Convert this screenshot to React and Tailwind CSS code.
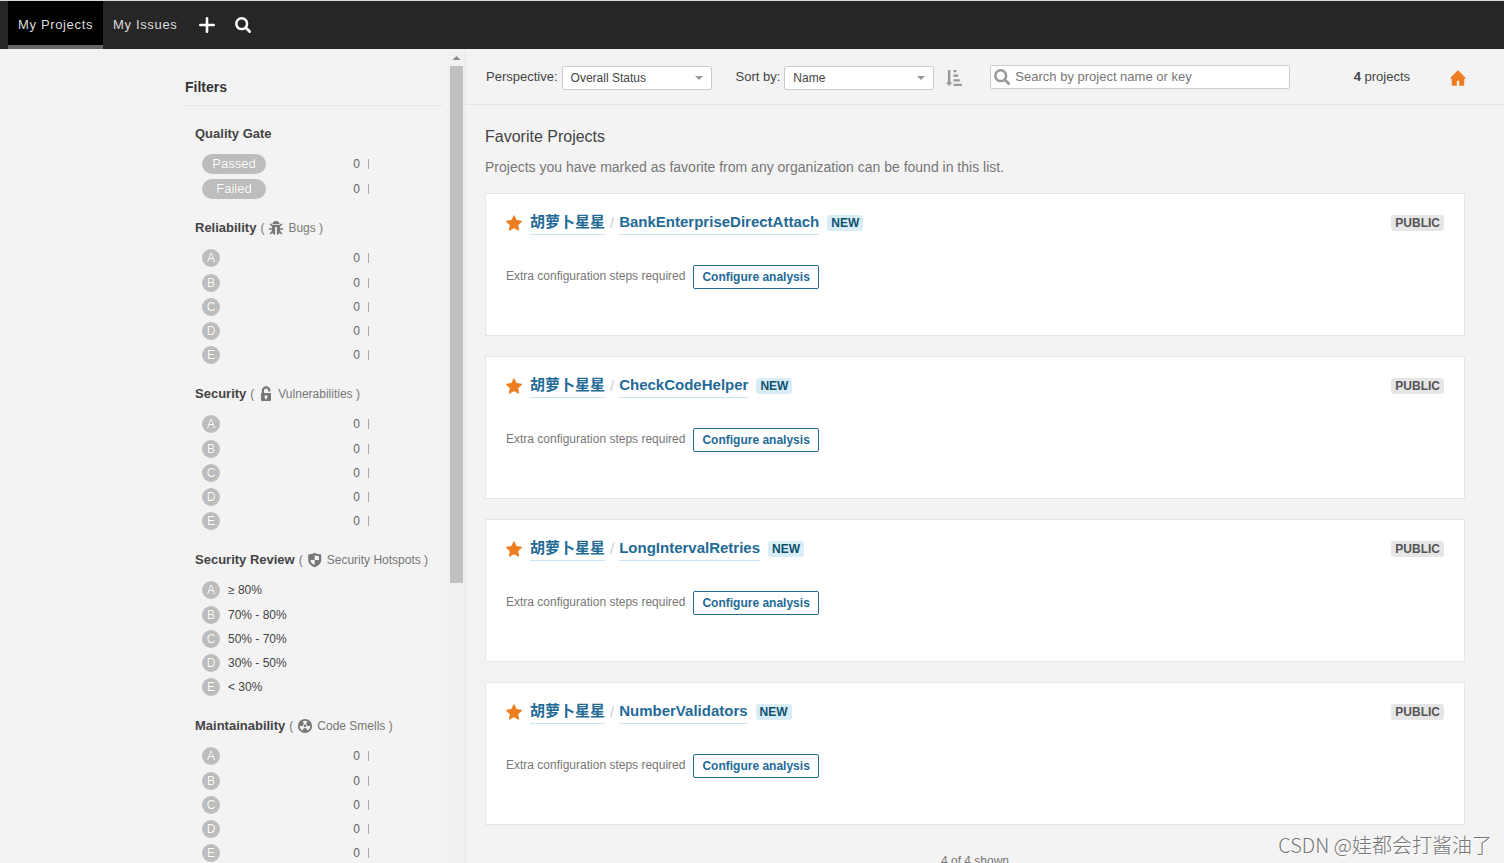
import React from "react";

const ratings = ["A", "B", "C", "D", "E"];

const reviewRanges = {
  A: "≥ 80%",
  B: "70% - 80%",
  C: "50% - 70%",
  D: "30% - 50%",
  E: "< 30%",
};

const projects = [
  "BankEnterpriseDirectAttach",
  "CheckCodeHelper",
  "LongIntervalRetries",
  "NumberValidators",
];

function PlusIcon() {
  return (
    <svg className="size-4" viewBox="0 0 16 16" fill="none" stroke="#fff" strokeWidth="2.6" strokeLinecap="round" aria-hidden="true">
      <path d="M8 1.300v13.400M1.300 8h13.400" />
    </svg>
  );
}

function SearchIcon({ className }) {
  return (
    <svg className={className} viewBox="0 0 16 16" fill="none" stroke="currentColor" aria-hidden="true">
      <circle cx="6.700" cy="6.700" r="5.400" strokeWidth="2.500" />
      <path d="M10.800 10.800l3.800 3.800" strokeWidth="2.800" strokeLinecap="round" />
    </svg>
  );
}

function BugIcon() {
  return (
    <svg className="size-4" viewBox="0 0 16 16" aria-hidden="true">
      <path fill="currentColor" d="M4.400 4.200C4.600 2.200 6 1 8 1s3.400 1.200 3.600 3.200z" />
      <path fill="currentColor" d="M4 5h8v6.200c0 1.900-1.100 3.200-3.100 3.600V7H7.100v7.800C5.100 14.400 4 13.100 4 11.200z" />
      <path
        fill="none"
        stroke="currentColor"
        strokeWidth="1.500"
        d="M4.600 6.200L2 3.800M11.400 6.200L14 3.800M4.400 8.900H1M11.600 8.900H15M4.600 11.400L2 14M11.400 11.400L14 14"
      />
    </svg>
  );
}

function VulnerabilityIcon() {
  return (
    <svg className="size-4" viewBox="0 0 16 16" aria-hidden="true">
      <path fill="none" stroke="currentColor" strokeWidth="2.100" d="M4.900 8V4.600a3.200 3.200 0 0 1 6.400 0v.9" />
      <path
        fill="currentColor"
        fillRule="evenodd"
        d="M3.800 7h8.400c.5 0 .8.300.8.800v6.400c0 .500-.3.800-.8.800H3.800c-.5 0-.8-.3-.8-.8V7.800c0-.5.3-.8.8-.8zM8 9.200a1.500 1.500 0 0 0-.8 2.800v1.200h1.600V12A1.500 1.500 0 0 0 8 9.200z"
      />
    </svg>
  );
}

function HotspotIcon() {
  return (
    <svg className="size-4" viewBox="0 0 16 16" aria-hidden="true">
      <path
        fill="currentColor"
        fillRule="evenodd"
        d="M7.700.8c1.800 1 4 1.600 6.500 1.700v5.200c0 3.400-2.400 6-6.500 7.500-4.100-1.500-6.500-4.100-6.500-7.500V2.500C3.700 2.400 5.900 1.800 7.700.8zM7.700 3.200v4.900H3.400c.3 2.300 1.700 3.900 4.300 5V8.100H12V4.300C10.400 4.100 9 3.800 7.700 3.200z"
      />
    </svg>
  );
}

function CodeSmellIcon() {
  return (
    <svg className="size-4" viewBox="0 0 16 16" aria-hidden="true">
      <circle cx="8" cy="8" r="6.200" fill="none" stroke="currentColor" strokeWidth="1.800" />
      <path
        fill="currentColor"
        d="M2 8l.2-1.500C2.600 4.600 3.600 3.200 5.200 2.300L7 5.800A2.500 2.500 0 0 0 5.700 8zM14 8l-.2-1.500c-.4-1.900-1.400-3.300-3-4.200L9 5.800A2.500 2.500 0 0 1 10.300 8zM4.900 13.200L6.900 9.900a2.300 2.300 0 0 0 2.200 0l2 3.300c-1.900 1.200-4.200 1.200-6.200 0z"
      />
      <circle cx="8" cy="7.800" r="1.400" fill="currentColor" />
    </svg>
  );
}

function SortIcon() {
  return (
    <svg className="size-4" viewBox="0 0 16 16" fill="#999" aria-hidden="true">
      <path d="M1.900 0h2.500v12.200h2L3.150 16 0 12.200h1.900zM7.500 0h3v2.200h-3zM7.500 4.600h4.700v2.200H7.500zM7.500 9.200h6.300v2.200H7.500zM7.500 13.800H16V16H7.500z" />
    </svg>
  );
}

function HomeIcon() {
  return (
    <svg className="size-4" viewBox="0 0 16 16" aria-hidden="true">
      <path
        fill="#ed7d20"
        d="M7.300.7c.4-.4 1-.4 1.400 0l7 7.200c.4.400.2.900-.3.900h-1.200v5.900c0 .6-.4 1-1 1H9.200v-4.300c0-.4-.2-.6-.6-.6H7.400c-.4 0-.6.2-.6.6v4.300H2.800c-.6 0-1-.4-1-1V8.800H.6c-.5 0-.7-.5-.3-.9z"
      />
    </svg>
  );
}

function StarIcon() {
  return (
    <svg className="size-4" viewBox="0 0 16 16" aria-hidden="true">
      <path
        fill="#ed7d20"
        stroke="#ed7d20"
        strokeWidth="1.200"
        strokeLinejoin="round"
        d="M8 .9l2.200 4.700 5.200.7-3.800 3.600.9 5.200L8 12.600l-4.500 2.500.9-5.200L.6 6.300l5.200-.7z"
      />
    </svg>
  );
}

function CountBar() {
  return (
    <span className="ml-auto flex items-center gap-2 text-xs text-[#666]">
      0
      <span className="h-2.5 w-px bg-[#aaa]" />
    </span>
  );
}

function FacetHeading({ title, icon, note }) {
  return (
    <h3 className="mb-2 flex h-5 items-center text-[13px] font-bold text-[#444]">
      {title}
      {note && (
        <span className="ml-1 flex items-center text-xs font-normal text-[#777]">
          (<span className="mx-1 flex">{icon}</span>
          {note} )
        </span>
      )}
    </h3>
  );
}

function RatingFacet({ title, icon, note, labels }) {
  return (
    <section>
      <FacetHeading title={title} icon={icon} note={note} />
      <ul className="w-[174px] pl-[7px]">
        {ratings.map((r) => (
          <li key={r} className="first:mb-px">
            <a href="#filter" className="flex h-6 items-center text-xs text-[#444]">
              <span className="flex size-[18px] items-center justify-center rounded-full bg-[#bdbdbd] text-xs text-white [text-shadow:0_0_1px_#0003]">{r}</span>
              {labels ? <span className="ml-2">{labels[r]}</span> : <CountBar />}
            </a>
          </li>
        ))}
      </ul>
    </section>
  );
}

function Sidebar() {
  return (
    <aside className="flex w-[466px] shrink-0 overflow-hidden border-r border-[#e6e6e6]">
      <div className="min-w-0 flex-1 pl-[185px] pr-[5px]">
        <h2 className="flex h-[57px] items-end border-b border-[#e6e6e6] pb-2 text-sm font-bold text-[#333]">Filters</h2>
        <div className="flex flex-col gap-[17px] pl-2.5 pt-[18px]">
          <section>
            <FacetHeading title="Quality Gate" />
            <ul className="w-[174px] pl-[7px]">
              {["Passed", "Failed"].map((s) => (
                <li key={s} className="first:mb-px">
                  <a href="#filter" className="flex h-6 items-center">
                    <span className="flex h-5 w-16 items-center justify-center rounded-full bg-[#bdbdbd] text-[13px] text-white [text-shadow:0_0_1px_#0003]">{s}</span>
                    <CountBar />
                  </a>
                </li>
              ))}
            </ul>
          </section>
          <RatingFacet title="Reliability" icon={<BugIcon />} note="Bugs" />
          <RatingFacet title="Security" icon={<VulnerabilityIcon />} note="Vulnerabilities" />
          <RatingFacet title="Security Review" icon={<HotspotIcon />} note="Security Hotspots" labels={reviewRanges} />
          <RatingFacet title="Maintainability" icon={<CodeSmellIcon />} note="Code Smells" />
        </div>
      </div>
      <div className="flex w-[17px] flex-col items-center bg-[#f1f1f1]" aria-hidden="true">
        <svg className="h-[17px] w-[17px] shrink-0" viewBox="0 0 17 17">
          <path d="M4.500 11h8L8.500 7z" fill="#8a8a8a" />
        </svg>
        <div className="h-[63.5%] w-[13px] bg-[#c1c1c1]" />
      </div>
    </aside>
  );
}

function Select({ id, label, value }) {
  return (
    <div className="flex items-center gap-1">
      <label htmlFor={id} className="whitespace-nowrap pb-0.5">{label}</label>
      <span className="relative flex">
        <select id={id} className="h-6 w-[150px] appearance-none rounded-xs border border-[#ccc] bg-white px-2 text-xs text-[#444]">
          <option>{value}</option>
        </select>
        <svg className="pointer-events-none absolute right-2 top-2.5 h-1 w-2.5" viewBox="0 0 10 4" aria-hidden="true">
          <path d="M1 0h8L5 4z" fill="#999" />
        </svg>
      </span>
    </div>
  );
}

function ProjectCard({ name }) {
  return (
    <article className="h-[143px] border border-[#e6e6e6] bg-white px-5 pt-[17px]">
      <div className="flex items-center">
        <button type="button" aria-label="Remove from favorites" className="mr-2 flex">
          <StarIcon />
        </button>
        <a href="#organization" className="flex h-6 items-center border-b border-[#cae3f2] pb-px text-[15px] font-bold text-[#236a97]">胡萝卜星星</a>
        <span className="mx-[5px] text-[15px] text-[#ccc]">/</span>
        <a href="#project" className="flex h-6 items-center border-b border-[#cae3f2] pb-px text-[15px] font-bold text-[#236a97]">{name}</a>
        <span className="ml-2 rounded-[3px] bg-[#d9edf7] px-1 text-xs font-bold leading-4 text-[#0e516f]">NEW</span>
        <span className="ml-auto rounded-[3px] bg-[#e6e6e6] px-1 text-xs font-bold leading-4 text-[#555]">PUBLIC</span>
      </div>
      <div className="mt-[30px] flex items-center gap-2 text-xs text-[#777]">
        <span className="pb-0.5">Extra configuration steps required</span>
        <button type="button" className="h-6 rounded-xs border border-[#236a97] px-2 font-bold text-[#236a97]">Configure analysis</button>
      </div>
    </article>
  );
}

export default function App() {
  return (
    <div className="relative flex h-screen flex-col overflow-hidden bg-[#f3f3f3] font-['Liberation_Sans','Noto_Sans_CJK_SC',sans-serif] text-[13px] text-[#444]">
      <header className="flex h-[49px] shrink-0 border-t border-[#d5dcd9] bg-[#262626] pl-2">
        <nav className="flex text-[13px] tracking-wider text-[#ddd]">
          <a href="#projects" className="flex items-center border-b-4 border-[#666] bg-black px-2.5 pt-1">My Projects</a>
          <a href="#issues" className="flex items-center px-2.5">My Issues</a>
        </nav>
        <button type="button" aria-label="Create" className="ml-3 flex items-center">
          <PlusIcon />
        </button>
        <button type="button" aria-label="Search" className="ml-5 flex items-center text-white">
          <SearchIcon className="size-4" />
        </button>
      </header>

      <div className="flex min-h-0 flex-1">
        <Sidebar />
        <main className="min-w-0 flex-1 overflow-hidden">
          <div className="flex h-14 items-center border-b border-[#e6e6e6] pl-5 pr-[38px] pt-0.5">
            <Select id="perspective" label="Perspective:" value="Overall Status" />
            <div className="ml-6">
              <Select id="sort" label="Sort by:" value="Name" />
            </div>
            <button type="button" aria-label="Reverse sort order" className="ml-3 flex">
              <SortIcon />
            </button>
            <div className="relative ml-7 w-[300px] pb-0.5">
              <SearchIcon className="absolute left-1 top-1 size-4 text-[#999]" />
              <input
                type="search"
                aria-label="Search projects"
                placeholder="Search by project name or key"
                className="block h-6 w-full rounded-xs border border-[#ccc] bg-white pl-6 pr-2 text-[13px] placeholder:text-[#777]"
              />
            </div>
            <span className="ml-auto pb-0.5">
              <b>4</b> projects
            </span>
            <a href="#home" aria-label="Homepage" className="ml-10 flex">
              <HomeIcon />
            </a>
          </div>

          <div className="pl-[19px] pr-[39px] pt-5">
            <h1 className="text-base leading-6">Favorite Projects</h1>
            <p className="mb-4 mt-2 text-sm leading-5 text-[#777]">
              Projects you have marked as favorite from any organization can be found in this list.
            </p>
            <div className="flex flex-col gap-5">
              {projects.map((name) => (
                <ProjectCard key={name} name={name} />
              ))}
            </div>
            <p className="mt-7 text-center text-xs text-[#777]">4 of 4 shown</p>
          </div>
        </main>
      </div>

      <div className="pointer-events-none absolute bottom-1 right-3 font-['Noto_Sans_CJK_SC',sans-serif] text-xl font-light leading-7 text-[#777] [text-shadow:1px_1px_0_#fff]">CSDN @娃都会打酱油了</div>
    </div>
  );
}
